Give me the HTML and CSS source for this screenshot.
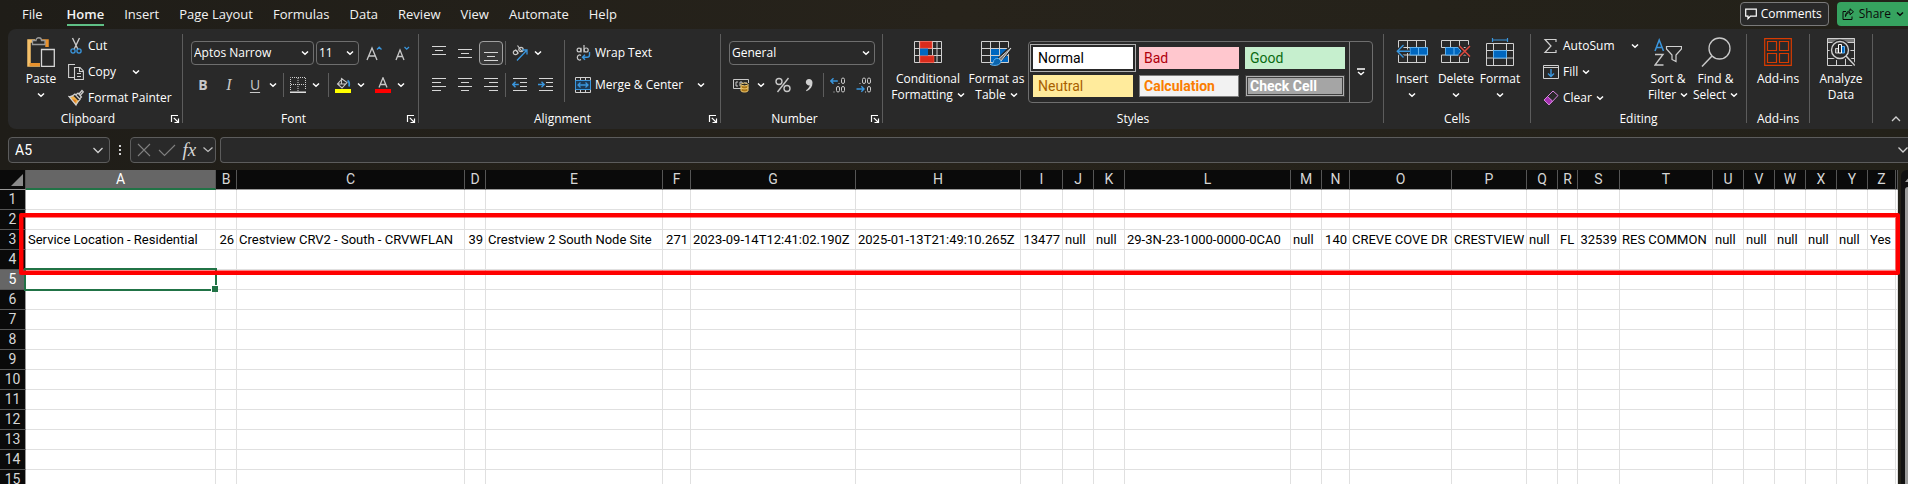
FILE: index.html
```html
<!DOCTYPE html>
<html lang="en">
<head>
<meta charset="utf-8">
<title>Workbook</title>
<link rel="stylesheet" href="styles.css">
</head>
<body>
<svg class="defs" aria-hidden="true">
  <symbol id="chev" viewBox="0 0 8 8"><path d="M1 2.5 4 5.3 7 2.5" fill="none" stroke="currentColor" stroke-width="1.5"/></symbol>
  <symbol id="launch" viewBox="0 0 10 10"><path d="M1.5 8V1.5H8M3.8 3.8 8 8M8.5 4.5v4h-4" fill="none" stroke="currentColor" stroke-width="1.2"/></symbol>
</svg>

<header class="topbar">
  <nav class="tabs">
    <a href="#file">File</a>
    <a href="#home" class="active">Home</a>
    <a href="#insert">Insert</a>
    <a href="#layout">Page Layout</a>
    <a href="#formulas">Formulas</a>
    <a href="#data">Data</a>
    <a href="#review">Review</a>
    <a href="#view">View</a>
    <a href="#automate">Automate</a>
    <a href="#help">Help</a>
  </nav>
  <button class="comments"><svg width="12" height="12" viewBox="0 0 12 12"><path d="M.7 1.2h10.6v7H5.5L3 10.700V8.200H.7z" fill="none" stroke="currentColor" stroke-width="1.2"/></svg>Comments</button>
  <button class="share"><svg width="12" height="12" viewBox="0 0 12 12"><path d="M4 3.500H1v8h9V8.500M3.500 8.500C4 5.500 5.500 4.600 8 4.600V6.800L11.500 3.800 8 .8V3C5.500 3 3.500 5 3.500 8.500z" fill="none" stroke="currentColor"/></svg>Share<svg class="chev"><use href="#chev"/></svg></button>
</header>

<main class="ribbon">
  <section class="group clipboard">
    <div class="body">
      <button class="big"><span class="pic"><svg width="28" height="30" viewBox="0 0 28 30"><path d="M8 4H2v24h11" fill="none" stroke="#f5c069" stroke-width="3.500"/><path d="M2.500 27.500H13" stroke="#e8912d" stroke-width="3"/><path d="M15 4h5v6" fill="none" stroke="#e8912d" stroke-width="3.500"/><path d="M5.500 7.500v-4H9C9-.2 14.500-.2 14.500 3.500H18v4z" fill="#292929" stroke="#9a9a9a" stroke-width="1.300"/><path d="M14.500 12.500h12.800v17H14.500z" fill="#292929" stroke="#d6d6d6" stroke-width="1.300"/></svg></span>Paste<svg class="chev"><use href="#chev"/></svg></button>
      <div class="list">
        <button><svg width="16" height="18" viewBox="0 0 16 18"><path d="M4.500 1 10 12.500M11.500 1 6 12.500" stroke="#c8c8c8" stroke-width="1.400" fill="none"/><circle cx="5" cy="14" r="2.100" fill="none" stroke="#3a96dd" stroke-width="1.300"/><circle cx="11" cy="14" r="2.100" fill="none" stroke="#3a96dd" stroke-width="1.300"/></svg>Cut</button>
        <button><svg width="16" height="18" viewBox="0 0 16 18"><path d="M6 14.500H.6V1.500H7M6.500 4.500H12l3.400 3.400v8.600H6.500zM11.500 4.500v4h4M9 10.500h4M9 13.500h4" fill="none" stroke="#d0d0d0" stroke-width="1.100"/></svg>Copy<svg class="chev far"><use href="#chev"/></svg></button>
        <button><svg width="16" height="18" viewBox="0 0 16 18"><path d="M1 7.500 5 6.500l6 6-3 3.500z" fill="#f0b048"/><path d="M3 10l5 1-1 4z" fill="#e07c1c"/><path d="M1 7.500C4 8 6 6 7 5l5 5.500c-2 1.500-3 3-4 5.500zM8 5.800l2-1.800 3.500 4-2 2M11 5l3-3.500 1.300 1.300L12.500 6" fill="none" stroke="#d0d0d0" stroke-width="1.200"/></svg>Format Painter</button>
      </div>
    </div>
    <h2>Clipboard</h2><button class="launch" aria-label="Clipboard settings"><svg width="10" height="10"><use href="#launch"/></svg></button>
  </section>
  <div class="rule"></div>

  <section class="group font">
    <div class="body rows">
      <div class="row">
        <label class="combo name"><select aria-label="Font"><option>Aptos Narrow</option></select><svg class="chev"><use href="#chev"/></svg></label>
        <label class="combo size"><select aria-label="Font size"><option>11</option></select><svg class="chev"><use href="#chev"/></svg></label>
        <button class="tool wide" aria-label="Increase font size"><svg width="18" height="18" viewBox="0 0 18 18"><path d="M2 16 7 4l5 12M3.700 12h6.600" fill="none" stroke="#c8c8c8" stroke-width="1.300"/><path d="M12 5.500 14.200 3.200 16.500 5.500" fill="none" stroke="#3a96dd" stroke-width="1.300"/></svg></button>
        <button class="tool wide" aria-label="Decrease font size"><svg width="18" height="18" viewBox="0 0 18 18"><path d="M3 16 7 6l4 10M4.500 12.500h5" fill="none" stroke="#c8c8c8" stroke-width="1.300"/><path d="M11.500 3 13.700 5.200 16 3" fill="none" stroke="#3a96dd" stroke-width="1.300"/></svg></button>
      </div>
      <div class="row">
        <button class="tool glyph bold">B</button>
        <button class="tool glyph italic">I</button>
        <span class="split"><button class="tool glyph under">U</button><button class="drop" aria-label="Underline options"><svg class="chev"><use href="#chev"/></svg></button></span>
        <i class="sep air"></i>
        <span class="split slim"><button class="tool" aria-label="Borders"><svg width="16" height="16" viewBox="0 0 16 16"><path d="M.5 13V.5h15V13M8 1v13M1 7.500h14" fill="none" stroke="#d0d0d0" stroke-dasharray="1 1"/><path d="M0 15.200h16" stroke="#fff" stroke-width="1.300"/></svg></button><button class="drop" aria-label="Border options"><svg class="chev"><use href="#chev"/></svg></button></span>
        <i class="sep air"></i>
        <span class="split slim"><button class="tool" aria-label="Fill color"><svg width="16" height="16" viewBox="0 0 16 16"><path d="M7.500 1.500 2.500 7l4.500 4L12 5.500 6.500 1.500v5M2.500 7H11" fill="none" stroke="#c8c8c8" stroke-width="1.100"/><path d="M12.500 3.500c2 1 2 3.500 1.500 6" fill="none" stroke="#3a96dd" stroke-width="1.800"/><path d="M0 12h16v4H0z" fill="#ff0"/></svg></button><button class="drop" aria-label="Fill color options"><svg class="chev"><use href="#chev"/></svg></button></span>
        <span class="split slim spaced"><button class="tool" aria-label="Font color"><svg width="16" height="16" viewBox="0 0 16 16"><path d="M4 10.500 8 .8l4 9.700M5.300 7.500h5.400" fill="none" stroke="#c8c8c8" stroke-width="1.300"/><path d="M0 12h16v4H0z" fill="#f00"/></svg></button><button class="drop" aria-label="Font color options"><svg class="chev"><use href="#chev"/></svg></button></span>
      </div>
    </div>
    <h2>Font</h2><button class="launch" aria-label="Font settings"><svg width="10" height="10"><use href="#launch"/></svg></button>
  </section>
  <div class="rule"></div>

  <section class="group align">
    <div class="body">
      <div class="rows">
        <div class="row">
          <button class="tool" aria-label="Top align"><svg width="14" height="16" viewBox="0 0 14 16"><path d="M0 1.500h14M3 5.500h8M0 9.500h14" stroke="#d6d6d6"/></svg></button>
          <button class="tool" aria-label="Middle align"><svg width="14" height="16" viewBox="0 0 14 16"><path d="M0 4.500h14M3 8.500h8M0 12.500h14" stroke="#d6d6d6"/></svg></button>
          <button class="tool on" aria-label="Bottom align"><svg width="14" height="16" viewBox="0 0 14 16"><path d="M0 7.500h14M3 11.500h8M0 15.500h14" stroke="#d6d6d6"/></svg></button>
          <i class="sep"></i>
          <span class="split"><button class="tool" aria-label="Orientation"><svg width="18" height="18" viewBox="0 0 18 18"><g fill="none" stroke="#c8c8c8" stroke-width="1.200"><circle cx="4.500" cy="8.500" r="2.200"/><path d="M4.500 5.500 7.500 9.500M6.500 1.500l4.500 6"/><circle cx="10" cy="5.500" r="2.200"/></g><path d="M6 16.500 16 6M11.500 6H16v4.500" fill="none" stroke="#3a96dd" stroke-width="1.300"/></svg></button><button class="drop" aria-label="Orientation options"><svg class="chev"><use href="#chev"/></svg></button></span>
        </div>
        <div class="row">
          <button class="tool" aria-label="Align left"><svg width="14" height="14" viewBox="0 0 14 14"><path d="M0 .5h14M0 4.500h9M0 8.500h14M0 12.500h9" stroke="#d6d6d6"/></svg></button>
          <button class="tool" aria-label="Center"><svg width="14" height="14" viewBox="0 0 14 14"><path d="M0 .5h14M3 4.500h8M0 8.500h14M3 12.500h8" stroke="#d6d6d6"/></svg></button>
          <button class="tool" aria-label="Align right"><svg width="14" height="14" viewBox="0 0 14 14"><path d="M0 .5h14M5 4.500h9M0 8.500h14M5 12.500h9" stroke="#d6d6d6"/></svg></button>
          <i class="sep"></i>
          <button class="tool" aria-label="Decrease indent"><svg width="16" height="14" viewBox="0 0 16 14"><path d="M1 .5h14M8 4.500h7M8 8.500h7M1 12.500h14" stroke="#d6d6d6"/><path d="M.8 6.500h6M3.500 3.800.8 6.500 3.500 9.200" fill="none" stroke="#3a96dd" stroke-width="1.400"/></svg></button>
          <button class="tool" aria-label="Increase indent"><svg width="16" height="14" viewBox="0 0 16 14"><path d="M1 .5h14M8 4.500h7M8 8.500h7M1 12.500h14" stroke="#d6d6d6"/><path d="M0 6.500h6M3.500 3.800 6.200 6.500 3.500 9.200" fill="none" stroke="#3a96dd" stroke-width="1.400"/></svg></button>
        </div>
      </div>
      <i class="sep tall"></i>
      <div class="rows textual">
        <button class="line"><svg width="16" height="18" viewBox="0 0 16 18"><g fill="none" stroke="#c8c8c8" stroke-width="1.200"><circle cx="4" cy="6" r="1.900"/><path d="M6 3.800V8.400M9 1v7.400M6 11.500c-1.500-1.200-3.700-.3-3.700 2s2.200 3.200 3.700 2"/><circle cx="11.200" cy="6" r="2"/></g><path d="M14.500 8v3c0 1.500-1 2.300-2.500 2.300H7.500M10 10.800 7.500 13.300 10 15.800" fill="none" stroke="#3a96dd" stroke-width="1.400"/></svg>Wrap Text</button>
        <button class="line"><svg width="16" height="16" viewBox="0 0 16 16"><path d="M.5.500h15v15H.5zM5.500.5v3M10.500.5v3M5.500 12.500v3M10.500 12.500v3" fill="none" stroke="#d0d0d0"/><path d="M.5 3.500h15v9H.5z" fill="#1d3a55" stroke="#3a96dd"/><path d="M3 8h10M5.500 5.500 3 8l2.500 2.500M10.500 5.500 13 8l-2.500 2.500" fill="none" stroke="#3a96dd" stroke-width="1.300"/></svg>Merge &amp; Center<svg class="chev far"><use href="#chev"/></svg></button>
      </div>
    </div>
    <h2>Alignment</h2><button class="launch" aria-label="Alignment settings"><svg width="10" height="10"><use href="#launch"/></svg></button>
  </section>
  <div class="rule"></div>

  <section class="group number">
    <div class="body rows">
      <label class="combo format"><select aria-label="Number format"><option>General</option></select><svg class="chev"><use href="#chev"/></svg></label>
      <div class="row">
        <span class="split"><button class="tool" aria-label="Accounting format"><svg width="18" height="16" viewBox="0 0 18 16"><path d="M9 11.500H1.500v-9h15V6M6 5H4v4h2M8 9V5h2v3M12 6h3" fill="none" stroke="#c8c8c8"/><path d="M9 7.500v6c0 2 7 2 7 0v-6z" fill="#a87417" stroke="#f5d078"/><ellipse cx="12.500" cy="7.500" rx="3.500" ry="1.400" fill="#292929" stroke="#f5d078"/><path d="M9 10.500c0 1.800 7 1.800 7 0" fill="none" stroke="#f5d078"/></svg></button><button class="drop" aria-label="Accounting options"><svg class="chev"><use href="#chev"/></svg></button></span>
        <button class="tool" aria-label="Percent style"><svg width="16" height="16" viewBox="0 0 16 16"><g fill="none" stroke="#c8c8c8" stroke-width="1.400"><circle cx="4" cy="4.500" r="3"/><circle cx="12" cy="11.500" r="3"/><path d="M13.500 1 2.500 15"/></g></svg></button>
        <button class="tool" aria-label="Comma style"><svg width="10" height="14" viewBox="0 0 10 14"><path d="M5 1a3.200 3.200 0 1 0 .8 6.300C5.300 9.500 4 11 2 12.200l.6 1C6.500 11.500 8.500 8.500 8.500 4.800 8.500 2.500 7 1 5 1z" fill="#d0d0d0"/></svg></button>
        <i class="sep"></i>
        <button class="tool" aria-label="Increase decimal"><svg width="16" height="16" viewBox="0 0 16 16"><g fill="none" stroke="#c8c8c8"><rect x="11.500" y="1" width="3" height="5.500" rx="1.500"/><rect x="6.500" y="9.500" width="3" height="5.500" rx="1.500"/><rect x="11.500" y="9.500" width="3" height="5.500" rx="1.500"/></g><path d="M8.500 6h1v1h-1zM3.500 14.500h1v1h-1z" fill="#c8c8c8"/><path d="M.8 4h7M3.500 1.300.8 4l2.700 2.700" fill="none" stroke="#3a96dd" stroke-width="1.400"/></svg></button>
        <button class="tool" aria-label="Decrease decimal"><svg width="16" height="16" viewBox="0 0 16 16"><g fill="none" stroke="#c8c8c8"><rect x="6.500" y="1" width="3" height="5.500" rx="1.500"/><rect x="11.500" y="1" width="3" height="5.500" rx="1.500"/><rect x="11.500" y="9.500" width="3" height="5.500" rx="1.500"/></g><path d="M3.500 6h1v1h-1zM9 14.500h1v1H9z" fill="#c8c8c8"/><path d="M.5 12h7.500M5.300 9.300 8 12l-2.700 2.700" fill="none" stroke="#3a96dd" stroke-width="1.400"/></svg></button>
      </div>
    </div>
    <h2>Number</h2><button class="launch" aria-label="Number settings"><svg width="10" height="10"><use href="#launch"/></svg></button>
  </section>
  <div class="rule"></div>

  <section class="group styles">
    <div class="body">
      <button class="big cond"><span class="pic"><svg width="28" height="22" viewBox="0 0 28 22"><path d="M.5.500h27v21H.5zM5.500 0v22M18.500 0v22M23 0v22M0 7.500h28M0 14.500h28" fill="none" stroke="#d0d0d0"/><path d="M6 .5h12v6.700H6zM6 14.800h14v6.700H6z" fill="#d92b1c" stroke="#ff5a48" stroke-width=".6"/><path d="M6 7.500h8v7H6z" fill="#0067c0"/></svg></span>Conditional<span>Formatting<svg class="chev"><use href="#chev"/></svg></span></button>
      <button class="big table-fmt"><span class="pic"><svg width="32" height="28" viewBox="0 0 32 28"><path d="M10 10.500h18v14H10z" fill="#0067c0"/><path d="M.5 3.500h27v21H.5zM9.500 3v22M18.500 3v22M0 10.500h28M0 17.500h28" fill="none" stroke="#d0d0d0"/><path d="M29 11 18.500 21.500" stroke="#292929" stroke-width="5"/><path d="M30 10 18 20.500l2 2.500z" fill="#777" stroke="#d6d6d6"/><path d="M17.500 20.500c-3-.5-5 1-5 3.500-.5 1.500-2 2-3.500 2.300 3.500 2 11 1.500 11-3.300z" fill="#0a64ad" stroke="#5eb1ef"/></svg></span>Format as<span>Table<svg class="chev"><use href="#chev"/></svg></span></button>
      <div class="gallery">
        <div class="swatches">
          <button class="normal">Normal</button>
          <button class="bad">Bad</button>
          <button class="good">Good</button>
          <button class="neutral">Neutral</button>
          <button class="calc">Calculation</button>
          <button class="check">Check Cell</button>
        </div>
        <button class="more" aria-label="More styles"><svg width="8" height="8" viewBox="0 0 8 8"><path d="M0 1h8M1 4l3 2.500L7 4" fill="none" stroke="#fff" stroke-width="1.400"/></svg></button>
      </div>
    </div>
    <h2>Styles</h2>
  </section>
  <div class="rule"></div>

  <section class="group cells">
    <div class="body">
      <button class="big"><span class="pic"><svg width="32" height="24" viewBox="0 0 32 24"><path d="M2.500.5h27v22h-27zM2.500 7.500h27M2.500 15h27M11.500 0v22M20.500 0v22" fill="none" stroke="#d0d0d0"/><path d="M14 7.500h17.500V15H14z" fill="#0067c0" stroke="#5eb1ef"/><path d="M22.500 8v7" stroke="#5eb1ef"/><path d="M14 11.200H1.500M7.500 5 1.300 11.200 7.500 17.500" fill="none" stroke="#292929" stroke-width="3.500"/><path d="M14 11.200H1.500M7.500 5 1.300 11.200 7.500 17.500" fill="none" stroke="#3a96dd" stroke-width="1.400"/></svg></span>Insert<svg class="chev"><use href="#chev"/></svg></button>
      <button class="big"><span class="pic"><svg width="30" height="24" viewBox="0 0 30 24"><path d="M.5 7.500v-7h27v7M.5 15v7.500h27V15M9.500 0v7.500M18.500 0v7.500M9.500 15v7M18.500 15v7M.5 7.500h27M.5 15h27" fill="none" stroke="#d0d0d0"/><path d="M4.500 7.500H17l3 3.700-3 3.800H4.500z" fill="#0067c0" stroke="#5eb1ef"/><path d="M13 8v7" stroke="#5eb1ef"/><path d="m18.500 6 10.500 10.500M29 6 18.500 16.500" stroke="#292929" stroke-width="4"/><path d="m18.500 6 10.500 10.500M29 6 18.500 16.500" stroke="#e0483e" stroke-width="1.500"/></svg></span>Delete<svg class="chev"><use href="#chev"/></svg></button>
      <button class="big"><span class="pic"><svg width="28" height="28" viewBox="0 0 28 28"><path d="M6.500 2h15M6.500 0v4M21.500 0v4" stroke="#3a96dd" stroke-width="1.200"/><path d="M.5 5.500h27v22H.5zM7.500 5v22M20.500 5v22M0 12.500h28M0 20h28" fill="none" stroke="#d0d0d0"/><path d="M7.500 12.500h13V20h-13z" fill="#0067c0" stroke="#5eb1ef"/></svg></span>Format<svg class="chev"><use href="#chev"/></svg></button>
    </div>
    <h2>Cells</h2>
  </section>
  <div class="rule"></div>

  <section class="group editing">
    <div class="body">
      <div class="list">
        <button><svg width="16" height="16" viewBox="0 0 16 16"><path d="M13 4V1.500H2L8 8l-6 6.500h11V12" fill="none" stroke="#d0d0d0" stroke-width="1.200"/></svg>AutoSum<svg class="chev far"><use href="#chev"/></svg></button>
        <button><svg width="16" height="16" viewBox="0 0 16 16"><path d="M.5 1.500h15v13H.5zM.5 3.500h15" fill="none" stroke="#d0d0d0"/><path d="M8 5v7.500M5 9.500l3 3 3-3" fill="none" stroke="#3a96dd" stroke-width="1.400"/></svg>Fill<svg class="chev"><use href="#chev"/></svg></button>
        <button><svg width="16" height="16" viewBox="0 0 16 16"><path d="M1 10 10 1l5 4.500L6 15z" fill="none" stroke="#d884e0"/><path d="M1 10l3.500-3.500L9.500 11 6 14.800z" fill="#a42fb0" stroke="#d884e0"/></svg>Clear<svg class="chev"><use href="#chev"/></svg></button>
      </div>
      <button class="big sort"><span class="pic"><svg width="28" height="28" viewBox="0 0 28 28"><path d="M1 13 5.200 2l4.300 11M2.500 9.500H8" fill="none" stroke="#3a96dd" stroke-width="1.500"/><path d="M1 16.500h8L1 27h8.500" fill="none" stroke="#c8c8c8" stroke-width="1.400"/><path d="M12.500 8.500h15V11L22 17v6.500l-4-2V17l-5.500-6z" fill="none" stroke="#d0d0d0" stroke-width="1.200"/></svg></span>Sort &amp;<span>Filter<svg class="chev"><use href="#chev"/></svg></span></button>
      <button class="big find"><span class="pic"><svg width="30" height="30" viewBox="0 0 30 30"><circle cx="18.500" cy="11.500" r="10.500" fill="none" stroke="#c8c8c8" stroke-width="1.300"/><path d="M11 19 1 29.500" stroke="#c8c8c8" stroke-width="1.500"/></svg></span>Find &amp;<span>Select<svg class="chev"><use href="#chev"/></svg></span></button>
    </div>
    <h2>Editing</h2>
  </section>
  <div class="rule"></div>

  <section class="group single">
    <div class="body">
      <button class="big"><span class="pic"><svg width="28" height="28" viewBox="0 0 28 28"><path d="M.7.700h26.600v26.600H.7zM3.500 3.500h9v9h-9zM15.500 3.500h9v9h-9zM3.500 15.500h9v9h-9zM15.500 15.500h9v9h-9z" fill="none" stroke="#d83b01" stroke-width="1.200"/></svg></span>Add-ins</button>
    </div>
    <h2>Add-ins</h2>
  </section>
  <div class="rule"></div>

  <section class="group single">
    <div class="body">
      <button class="big"><span class="pic"><svg width="28" height="28" viewBox="0 0 28 28"><path d="M0 0h28v4H0z" fill="#777"/><path d="M.5.500h27v27H.5zM.5 4.500h27M.5 12.500h27M.5 20.500h27M9.500 20v8M18.500 20v8" fill="none" stroke="#d0d0d0"/><circle cx="13" cy="12" r="10.500" fill="#292929"/><circle cx="13" cy="12" r="8.500" fill="none" stroke="#d0d0d0" stroke-width="1.400"/><path d="m19.500 18.500 8 8.500" stroke="#292929" stroke-width="4"/><path d="m19 18 8.500 9" stroke="#d0d0d0" stroke-width="1.500"/><path d="M8.500 10.500h3V15h-3z" fill="#666" stroke="#c8c8c8"/><path d="M14.500 8.500h3V15h-3z" fill="#0067c0" stroke="#5eb1ef"/><path d="M11.500 6.500h3V15h-3z" fill="#292929" stroke="#fff"/></svg></span>Analyze<span>Data</span></button>
    </div>
  </section>
  <div class="rule"></div>
  <button class="collapse" aria-label="Collapse ribbon"><svg width="10" height="8" viewBox="0 0 10 8"><path d="m1 6 4-4 4 4" fill="none" stroke="#d0d0d0" stroke-width="1.300"/></svg></button>
</main>

<section class="formula">
  <label class="namebox"><input type="text" value="A5" aria-label="Name box"><svg width="12" height="8" viewBox="0 0 12 8"><path d="m1.500 2 4.500 4.500L10.500 2" fill="none" stroke="#d0d0d0" stroke-width="1.300"/></svg></label>
  <svg class="dots" width="4" height="12" viewBox="0 0 4 12"><path d="M1 1h2v2H1zM1 5h2v2H1zM1 9h2v2H1z" fill="#d0d0d0"/></svg>
  <div class="fxbox">
    <button aria-label="Cancel"><svg width="14" height="14" viewBox="0 0 14 14"><path d="m1 1 12 12M13 1 1 13" stroke="#808080" stroke-width="1.100"/></svg></button>
    <button aria-label="Enter"><svg width="18" height="14" viewBox="0 0 18 14"><path d="m1 7 5.500 5.500L17 2" fill="none" stroke="#808080" stroke-width="1.100"/></svg></button>
    <button class="fx">fx</button>
    <button aria-label="Function options"><svg width="10" height="8" viewBox="0 0 10 8"><path d="m.5 1.500 4.500 4 4.500-4" fill="none" stroke="#c0c0c0" stroke-width="1.200"/></svg></button>
  </div>
  <label class="entry"><input type="text" aria-label="Formula bar"><svg width="10" height="8" viewBox="0 0 10 8"><path d="m.5 1.500 4.500 4.500 4.500-4.500" fill="none" stroke="#d0d0d0" stroke-width="1.300"/></svg></label>
</section>

<section class="workspace">
  <div class="sheet">
    <table>
      <colgroup><col class="w26"><col class="w190"><col class="w21"><col class="w228"><col class="w21"><col class="w177"><col class="w28"><col class="w165"><col class="w165"><col class="w42"><col class="w31"><col class="w31"><col class="w166"><col class="w31"><col class="w28"><col class="w102"><col class="w75"><col class="w31"><col class="w20"><col class="w42"><col class="w93"><col class="w31"><col class="w31"><col class="w31"><col class="w31"><col class="w31"><col class="w28"><col></colgroup>
      <thead>
        <tr><th class="corner"><svg width="12" height="12" viewBox="0 0 12 12"><path d="M12 0v12H0z" fill="#8a8a8a"/></svg></th><th class="picked">A</th><th>B</th><th>C</th><th>D</th><th>E</th><th>F</th><th>G</th><th>H</th><th>I</th><th>J</th><th>K</th><th>L</th><th>M</th><th>N</th><th>O</th><th>P</th><th>Q</th><th>R</th><th>S</th><th>T</th><th>U</th><th>V</th><th>W</th><th>X</th><th>Y</th><th>Z</th><th></th></tr>
      </thead>
      <tbody>
        <tr><th>1</th><td><td><td><td><td><td><td><td><td><td><td><td><td><td><td><td><td><td><td><td><td><td><td><td><td><td><td></tr>
        <tr><th>2</th><td><td><td><td><td><td><td><td><td><td><td><td><td><td><td><td><td><td><td><td><td><td><td><td><td><td><td></tr>
        <tr><th>3</th><td>Service Location - Residential</td><td class="num">26</td><td>Crestview CRV2 - South - CRVWFLAN</td><td class="num">39</td><td>Crestview 2 South Node Site</td><td class="num">271</td><td>2023-09-14T12:41:02.190Z</td><td>2025-01-13T21:49:10.265Z</td><td class="num">13477</td><td>null</td><td>null</td><td>29-3N-23-1000-0000-0CA0</td><td>null</td><td class="num">140</td><td>CREVE COVE DR</td><td>CRESTVIEW</td><td>null</td><td>FL</td><td class="num">32539</td><td>RES COMMON</td><td>null</td><td>null</td><td>null</td><td>null</td><td>null</td><td>Yes</td><td></td></tr>
        <tr><th>4</th><td><td><td><td><td><td><td><td><td><td><td><td><td><td><td><td><td><td><td><td><td><td><td><td><td><td><td></tr>
        <tr><th class="picked">5</th><td class="current"><td><td><td><td><td><td><td><td><td><td><td><td><td><td><td><td><td><td><td><td><td><td><td><td><td><td></tr>
        <tr><th>6</th><td><td><td><td><td><td><td><td><td><td><td><td><td><td><td><td><td><td><td><td><td><td><td><td><td><td><td></tr>
        <tr><th>7</th><td><td><td><td><td><td><td><td><td><td><td><td><td><td><td><td><td><td><td><td><td><td><td><td><td><td><td></tr>
        <tr><th>8</th><td><td><td><td><td><td><td><td><td><td><td><td><td><td><td><td><td><td><td><td><td><td><td><td><td><td><td></tr>
        <tr><th>9</th><td><td><td><td><td><td><td><td><td><td><td><td><td><td><td><td><td><td><td><td><td><td><td><td><td><td><td></tr>
        <tr><th>10</th><td><td><td><td><td><td><td><td><td><td><td><td><td><td><td><td><td><td><td><td><td><td><td><td><td><td><td></tr>
        <tr><th>11</th><td><td><td><td><td><td><td><td><td><td><td><td><td><td><td><td><td><td><td><td><td><td><td><td><td><td><td></tr>
        <tr><th>12</th><td><td><td><td><td><td><td><td><td><td><td><td><td><td><td><td><td><td><td><td><td><td><td><td><td><td><td></tr>
        <tr><th>13</th><td><td><td><td><td><td><td><td><td><td><td><td><td><td><td><td><td><td><td><td><td><td><td><td><td><td><td></tr>
        <tr><th>14</th><td><td><td><td><td><td><td><td><td><td><td><td><td><td><td><td><td><td><td><td><td><td><td><td><td><td><td></tr>
        <tr><th>15</th><td><td><td><td><td><td><td><td><td><td><td><td><td><td><td><td><td><td><td><td><td><td><td><td><td><td><td></tr>
      </tbody>
    </table>
  </div>
  <div class="scroll"><svg width="6" height="6" viewBox="0 0 6 6"><path d="M0 6 5 0l1 1v5z" fill="#a0a0a0"/></svg><div class="thumb"></div></div>
  <div class="highlight"></div>
</section>
</body>
</html>
```
FILE: styles.css
```css
* { box-sizing: border-box; }

body {
  margin: 0;
  height: 100vh;
  display: flex;
  flex-direction: column;
  overflow: hidden;
  background: linear-gradient(90deg, #1f1d18, #27231b 50%, #232119);
  color: #fff;
  font: 12px/16px "Open Sans", "Noto Sans", sans-serif;
}

button, input, select { font: inherit; color: inherit; }
button { border: 0; padding: 0; background: none; }
svg { flex: none; display: block; }
.defs { position: absolute; width: 0; height: 0; }
.chev { width: 8px; height: 8px; }

/* Tabs and title buttons */
.topbar { display: flex; align-items: flex-start; height: 29px; padding-top: 2px; }
.tabs { display: flex; gap: 20px; flex: 1; padding-left: 22px; font-size: 13px; line-height: 20px; }
.tabs a { color: #f2f2f2; text-decoration: none; padding-top: 2px; border-bottom: 2px solid transparent; height: 24px; }
.tabs .active { font-weight: 600; border-color: #5fbf85; margin-left: 4px; }
.comments, .share { display: flex; align-items: center; height: 24px; gap: 4px; border-radius: 4px; }
.comments { border: 1px solid #7a7a7a; background: #292929; padding: 0 6px 0 4px; }
.share { margin-left: 8px; padding: 0 4px 0 5px; gap: 5px; background: #36a35f; color: #0a0a0a; border-radius: 4px 0 0 4px; }

/* Ribbon */
.ribbon { display: flex; height: 100px; margin-left: 8px; background: #292929; border-radius: 8px 0 0 8px; }
.rule { width: 1px; height: 89px; margin-top: 5px; background: #5c5c5c; }
.group { display: grid; grid-template: 78px 16px / 1fr; padding-top: 4px; }
.group h2 { margin: 0; grid-area: 2 / 1; text-align: center; font-size: 12px; font-weight: 400; }
.clipboard h2, .font h2, .align h2, .number h2 { padding-right: 14px; }
.launch { grid-area: 2 / 1; justify-self: end; align-self: center; margin-right: 2px; }
.body { display: flex; align-items: flex-start; }
.body.rows, .body > .rows { padding-top: 8px; }
.rows { display: flex; flex-direction: column; gap: 8px; }
.row { display: flex; gap: 2px; height: 24px; }
.clipboard { width: 174px; }
.clipboard .body { padding-left: 6px; }
.font { width: 235px; }
.font .body, .number .body, .styles .body { padding-left: 8px; }
.align { width: 301px; }
.align .body { padding-left: 8px; }
.number { width: 161px; }
.styles { width: 500px; }
.cells { width: 146px; }
.cells .body { padding-left: 6px; }
.editing { width: 215px; }
.editing .body { padding-left: 12px; }
.single { width: 62px; }
.single .big { width: 100%; }
.collapse { flex: 1; align-self: flex-end; display: flex; justify-content: center; padding: 0 0 6px 10px; }

.big { display: flex; flex-direction: column; align-items: center; padding-top: 4px; width: 44px; white-space: nowrap; }
.big .pic { height: 30px; margin-bottom: 4px; display: flex; align-items: center; justify-content: center; }
.big span { display: flex; align-items: center; gap: 4px; }
.big > .chev { margin-top: 4px; }
.clipboard .big { width: 54px; }
.big.cond { width: 74px; }
.big.table-fmt { width: 63px; }
.big.sort { width: 48px; }
.big.find { width: 47px; }

.list { display: flex; flex-direction: column; }
.list button { height: 26px; display: flex; align-items: center; gap: 4px; white-space: nowrap; }
.list .far { margin-left: 12px; }
.editing .list { width: 101px; }

.tool { width: 24px; height: 24px; display: flex; align-items: center; justify-content: center; }
.tool.wide { width: 26px; }
.tool.on { border: 1px solid #a0a0a0; border-radius: 4px; background: #383838; }
.glyph { font-size: 14px; color: #c8c8c8; }
.bold { font-weight: 700; }
.italic { font-family: "Liberation Serif", serif; font-style: italic; font-size: 16px; }
.under { text-decoration: underline; text-underline-offset: 2px; }
.split { display: flex; }
.drop { width: 12px; display: flex; align-items: center; justify-content: center; }
.slim .tool { width: 20px; }
.slim .drop, .number .drop { width: 16px; }
.spaced { margin-left: 2px; }
.sep { width: 1px; background: #5c5c5c; }
.sep.air { margin: 0 2px; }
.sep.tall { height: 62px; margin: 7px 10px 0 6px; }
.line { display: flex; align-items: center; gap: 4px; height: 24px; white-space: nowrap; }
.line .far { margin-left: 10px; }

.combo { display: grid; grid-template-columns: 1fr 12px; align-items: center; height: 24px; border: 1px solid #6e6e6e; border-radius: 4px; }
.combo select { grid-area: 1 / 1 / 2 / 3; appearance: none; border: 0; background: none; padding: 0 2px; height: 22px; outline: 0; }
.combo .chev { grid-area: 1 / 2; }
.combo.name { width: 123px; }
.combo.size { width: 43px; }
.combo.format { width: 146px; }

.gallery { display: flex; height: 62px; width: 345px; margin-top: 8px; border: 1px solid #6e6e6e; border-radius: 4px; }
.swatches { flex: 1; display: grid; grid-template: 22px 22px / repeat(3, 100px); gap: 6px; padding: 5px 4px; }
.swatches button { text-align: left; padding-left: 5px; font: 14px/20px Roboto, "Open Sans", sans-serif; }
.more { width: 24px; display: flex; align-items: center; justify-content: center; border-left: 1px solid #8c8c8c; }
.swatches .normal { background: #fff; color: #000; outline: 1px solid #b0b0b0; outline-offset: 2px; }
.swatches .bad { background: #ffc7ce; color: #b0000c; }
.swatches .good { background: #c6efce; color: #0a6b12; }
.swatches .neutral { background: #ffeb9c; color: #a85f00; }
.swatches .calc { background: #f2f2f2; color: #fa7d00; border: 1px solid #7f7f7f; font-weight: 700; padding-left: 4px; }
.swatches .check { background: #a5a5a5; color: #fff; border: 3px double #3f3f3f; outline: 1px solid #b0b0b0; outline-offset: -2px; font-weight: 700; line-height: 16px; padding-left: 2px; }

/* Formula bar */
.formula { display: flex; align-items: center; height: 41px; padding: 8px 0 7px 8px; }
.formula button { display: flex; align-items: center; justify-content: center; }
.namebox, .fxbox, .entry { display: flex; align-items: center; height: 26px; background: #292929; border: 1px solid #5c5c5c; border-radius: 4px; }
.formula input { flex: 1; min-width: 0; border: 0; outline: 0; background: none; padding: 0 6px; font: 14px/20px Roboto, "Open Sans", sans-serif; }
.namebox { width: 102px; padding-right: 5px; }
.dots { margin: 0 8px; }
.fxbox { width: 86px; justify-content: space-between; padding: 0 2px 0 6px; }
.formula .fx { font: italic 19px/20px "Liberation Serif", serif; color: #d6d6d6; }
.entry { flex: 1; margin-left: 4px; border-right: 0; border-radius: 4px 0 0 4px; }

/* Grid */
.workspace { position: relative; flex: 1; min-height: 0; display: flex; }
.sheet { flex: 1; min-width: 0; overflow: hidden; background: #fff; }
table { width: 100%; table-layout: fixed; border-collapse: separate; border-spacing: 0; color: #000; font: 13px/19px Roboto, "Open Sans", sans-serif; }
td, th { height: 20px; padding: 0 2px; border: solid #e0e0e0; border-width: 0 1px 1px 0; white-space: nowrap; font-weight: 400; }
th { padding: 0; background: #0a0a0a; color: #d6d6d6; border-color: #555; text-align: center; font-size: 14px; }
thead th { border-bottom-color: #999; }
tbody th { border-right-color: #999; }
th.picked { background: #666; color: #fff; }
thead .picked { border-bottom: 2px solid #217346; line-height: 18px; }
.corner svg { margin: 0 2px 0 auto; }
.num { text-align: right; }
.current { position: relative; }
.current::before { content: ""; position: absolute; inset: -2px -2px -2px -2px; border: 2px solid #217346; }
.current::after { content: ""; position: absolute; right: -3px; bottom: -3px; width: 6px; height: 6px; background: #217346; border: solid #fff; border-width: 1px 0 0 1px; }

.w20 { width: 20px; }
.w21 { width: 21px; }
.w26 { width: 26px; }
.w28 { width: 28px; }
.w31 { width: 31px; }
.w42 { width: 42px; }
.w75 { width: 75px; }
.w93 { width: 93px; }
.w102 { width: 102px; }
.w165 { width: 165px; }
.w166 { width: 166px; }
.w177 { width: 177px; }
.w190 { width: 190px; }
.w228 { width: 228px; }

.scroll { width: 7px; margin-left: 3px; padding: 6px 0 0 4px; background: #121212; border-radius: 6px 0 0 0; display: flex; flex-direction: column; overflow: hidden; }
.thumb { flex: 1; margin-top: 5px; background: #9a9a9a; border-radius: 3px 0 0 0; }

.highlight { position: absolute; top: 43px; left: 19px; right: 8px; height: 62px; border: 4px solid #f00; border-radius: 2px; box-shadow: inset 0 0 0 1px rgba(255, 0, 0, .5); pointer-events: none; }
```
